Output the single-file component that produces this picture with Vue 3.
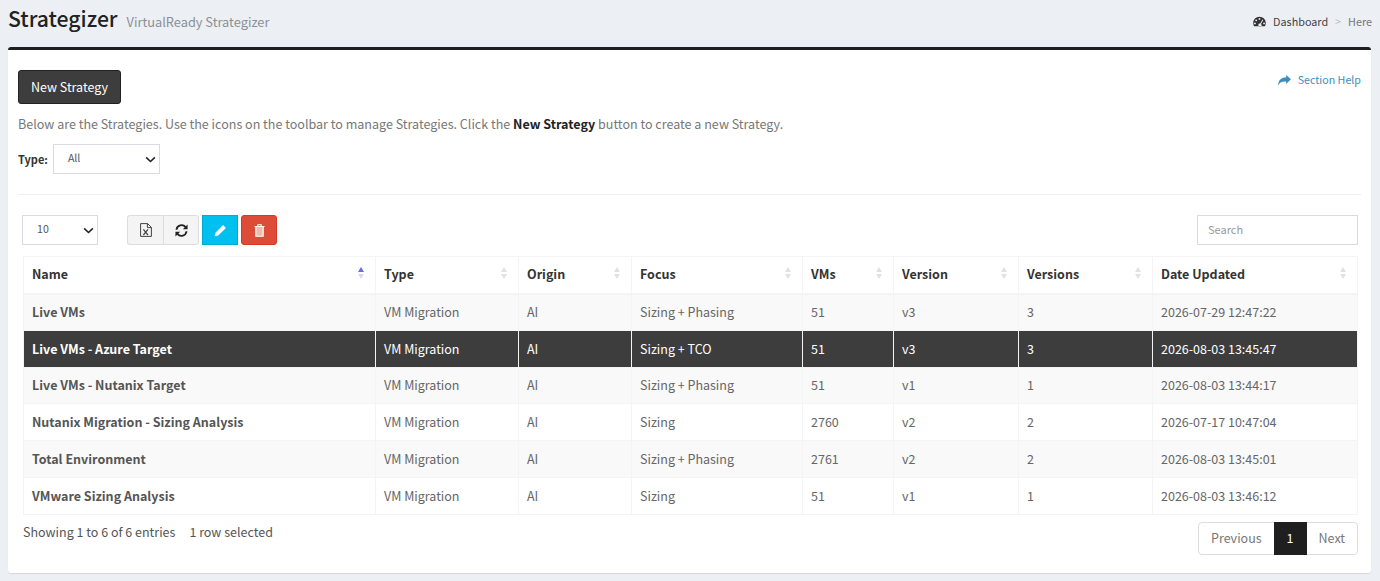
<template>
  <div class="page">
    <header class="page-header">
      <div class="titles">
        <h1>Strategizer</h1>
        <small>VirtualReady Strategizer</small>
      </div>
      <nav class="crumbs">
        <svg class="dash-icon" viewBox="0 0 16 14" width="13" height="11">
          <path fill-rule="evenodd" d="M8 1C3.6 1 0 4.6 0 9c0 1.500.4 2.900 1.100 4h13.800c.7-1.100 1.100-2.500 1.100-4 0-4.400-3.600-8-8-8zM8 2.500a1.200 1.200 0 1 1 0 2.400 1.200 1.200 0 0 1 0-2.400zM3.800 4.300a1.200 1.200 0 1 1 0 2.400 1.200 1.200 0 0 1 0-2.400zM2.200 8.200a1.200 1.200 0 1 1 0 2.400 1.200 1.200 0 0 1 0-2.400zM13.800 8.200a1.200 1.200 0 1 1 0 2.400 1.200 1.200 0 0 1 0-2.400zM11.800 4.600l1 .5-2.900 5a2 2 0 1 1-1-.5z" />
        </svg>
        <span class="crumb-link">Dashboard</span>
        <span class="crumb-sep">&gt;</span>
        <span class="crumb-here">Here</span>
      </nav>
    </header>

    <section class="box">
      <div class="top-row">
        <button class="btn-new">New Strategy</button>
        <a class="help">
          <svg viewBox="0 0 14 12" width="13" height="11">
            <path d="M14 4.700 8.800 0v2.600C4 2.600.3 4.400 0 11.800c1.300-3.600 4-5.100 8.800-4.700v2.700z" fill="#3c8dbc" />
          </svg>
          Section Help
        </a>
      </div>
      <p class="intro">Below are the Strategies. Use the icons on the toolbar to manage Strategies. Click the <b>New Strategy</b> button to create a new Strategy.</p>
      <div class="type-row">
        <label>Type:</label>
        <div class="select type-select">All<svg class="chev" viewBox="0 0 12 8" width="11" height="7"><path d="M1 1.500 6 6.300l5-4.800" fill="none" stroke="#222" stroke-width="1.800" /></svg></div>
      </div>

      <hr />

      <div class="toolbar">
        <div class="select len-select">10<svg class="chev" viewBox="0 0 12 8" width="11" height="7"><path d="M1 1.500 6 6.300l5-4.800" fill="none" stroke="#222" stroke-width="1.800" /></svg></div>
        <div class="tools">
          <div class="tool-group">
            <button class="tool">
              <svg viewBox="0 0 12 14" width="12" height="14">
                <path d="M.6.6h7l3.800 3.800v9H.6zM7.400.6v4h4" fill="none" stroke="#444" stroke-width="1" />
                <path d="m3.400 6.300 4.600 5.700M8 6.300l-4.600 5.700" fill="none" stroke="#444" stroke-width="1.200" />
              </svg>
            </button>
            <button class="tool">
              <svg viewBox="0 0 14 14" width="13" height="13">
                <path d="M1.600 6.200A5.500 5.500 0 0 1 11.400 3.400" fill="none" stroke="#222" stroke-width="2" />
                <path d="M13.500.6v5h-5z" fill="#222" />
                <path d="M12.400 7.800A5.500 5.500 0 0 1 2.600 10.600" fill="none" stroke="#222" stroke-width="2" />
                <path d="M.5 13.400v-5h5z" fill="#222" />
              </svg>
            </button>
          </div>
          <button class="tool-color edit">
            <svg viewBox="0 0 14 14" width="13" height="13">
              <path d="M9.800 1.200 12.800 4.200 4.600 12.400.8 13.200l.8-3.800z" fill="#fff" />
            </svg>
          </button>
          <button class="tool-color del">
            <svg viewBox="0 0 12 14" width="11" height="13">
              <path d="M4.200 2V.8h3.600V2M.5 2.700h11" fill="none" stroke="#fff" stroke-width="1.200" />
              <path d="M2 3v10.300h8V3" fill="#f3b9ae" stroke="#fff" stroke-width="1.300" />
            </svg>
          </button>
        </div>
        <div class="search">Search</div>
      </div>

      <table>
        <colgroup>
          <col v-for="w in colWidths" :key="w.key" :style="{ width: w.px + 'px' }" />
        </colgroup>
        <thead>
          <tr>
            <th v-for="(c, i) in columns" :key="c">
              {{ c }}
              <span class="sort">
                <i class="up" :class="{ active: i === 0 }"></i>
                <i class="down"></i>
              </span>
            </th>
          </tr>
        </thead>
        <tbody>
          <tr v-for="(r, i) in rows" :key="r.name" :class="{ odd: i % 2 === 0, selected: r.selected }">
            <td class="name">{{ r.name }}</td>
            <td>VM Migration</td>
            <td>AI</td>
            <td>{{ r.focus }}</td>
            <td>{{ r.vms }}</td>
            <td>{{ r.version }}</td>
            <td>{{ r.versions }}</td>
            <td>{{ r.date }}</td>
          </tr>
        </tbody>
      </table>

      <div class="table-foot">
        <div class="info">Showing 1 to 6 of 6 entries<span class="sel">1 row selected</span></div>
        <div class="pager">
          <span class="pg">Previous</span>
          <span class="pg current">1</span>
          <span class="pg">Next</span>
        </div>
      </div>
    </section>
  </div>
</template>

<script setup>
const columns = ['Name', 'Type', 'Origin', 'Focus', 'VMs', 'Version', 'Versions', 'Date Updated']
const colWidths = [352, 143, 113, 171, 91, 125, 134, 205].map((px, key) => ({ px, key }))

const rows = [
  { name: 'Live VMs', focus: 'Sizing + Phasing', vms: 51, version: 'v3', versions: 3, date: '2026-07-29 12:47:22' },
  { name: 'Live VMs - Azure Target', focus: 'Sizing + TCO', vms: 51, version: 'v3', versions: 3, date: '2026-08-03 13:45:47', selected: true },
  { name: 'Live VMs - Nutanix Target', focus: 'Sizing + Phasing', vms: 51, version: 'v1', versions: 1, date: '2026-08-03 13:44:17' },
  { name: 'Nutanix Migration - Sizing Analysis', focus: 'Sizing', vms: 2760, version: 'v2', versions: 2, date: '2026-07-17 10:47:04' },
  { name: 'Total Environment', focus: 'Sizing + Phasing', vms: 2761, version: 'v2', versions: 2, date: '2026-08-03 13:45:01' },
  { name: 'VMware Sizing Analysis', focus: 'Sizing', vms: 51, version: 'v1', versions: 1, date: '2026-08-03 13:46:12' },
]
</script>

<style>
body {
  background: #ecf0f5;
}
</style>

<style scoped>
.page {
  width: 1380px;
  height: 581px;
  overflow: hidden;
  background: #ecf0f5;
  font-family: "Noto Sans CJK SC", "Noto Sans", sans-serif;
  font-size: 12.5px;
  line-height: 20px;
  color: #333;
  box-sizing: border-box;
}
.page-header {
  height: 47px;
  display: flex;
  justify-content: space-between;
  padding: 0 8px 0 8px;
  box-sizing: border-box;
}
.titles {
  display: flex;
  align-items: baseline;
  height: 36px;
}
h1 {
  margin: 0;
  font-size: 21.200px;
  line-height: 36px;
  font-weight: 500;
  color: #222;
}
small {
  margin-left: 9px;
  font-size: 12.800px;
  color: #8a8f94;
}
.crumbs {
  display: flex;
  align-items: center;
  height: 42px;
  font-size: 10.800px;
  color: #444;
}
.dash-icon {
  fill: #333;
  margin-right: 7px;
}
.crumb-sep {
  margin: 0 7px;
  color: #bbb;
}
.crumb-here {
  color: #777;
}
.box {
  margin: 0 9px 0 8px;
  height: 526px;
  box-sizing: border-box;
  background: #fff;
  border-top: 3px solid #1f1f1f;
  border-radius: 3px;
  padding: 20px 10px 0 10px;
  box-shadow: 0 1px 1px rgba(0, 0, 0, 0.1);
}
.top-row {
  display: flex;
  justify-content: space-between;
  align-items: flex-start;
}
.btn-new {
  width: 103px;
  height: 34px;
  background: #3d3d3d;
  border: 1px solid #222;
  border-radius: 3px;
  color: #fff;
  font: inherit;
  padding: 0;
}
.help {
  display: flex;
  align-items: center;
  gap: 7px;
  height: 20px;
  font-size: 10.700px;
  color: #3c8dbc;
}
.intro {
  margin: 10px 0 0;
  font-size: 12.540px;
  color: #777;
}
.intro b {
  color: #222;
}
.type-row {
  display: flex;
  align-items: center;
  margin-top: 10px;
  height: 30px;
}
.type-row label {
  font-size: 11px;
  font-weight: 700;
  color: #333;
  margin-right: 5px;
}
.select {
  box-sizing: border-box;
  display: flex;
  align-items: center;
  justify-content: space-between;
  border: 1px solid #d8dbe2;
  background: #fff;
  font-size: 10.600px;
  line-height: 18px;
  color: #555;
  padding: 0 3px 2px 14px;
}
.type-select {
  width: 107px;
  height: 30px;
}
.len-select {
  width: 76px;
  height: 30px;
}
.chev {
  margin-top: 2px;
}
hr {
  border: 0;
  border-top: 1px solid #eee;
  margin: 20px 0 20px;
}
.toolbar {
  display: flex;
  align-items: center;
  padding: 0 3px 0 4px;
  height: 30px;
}
.tools {
  display: flex;
  gap: 3px;
  margin-left: 29px;
}
.tool-group {
  display: flex;
}
.tool {
  width: 36px;
  height: 30px;
  background: #f4f4f4;
  border: 1px solid #ddd;
  padding: 0;
  display: flex;
  align-items: center;
  justify-content: center;
}
.tool:first-child {
  border-radius: 3px 0 0 3px;
  border-right: 0;
}
.tool:last-child {
  border-radius: 0 3px 3px 0;
}
.tool-color {
  width: 36px;
  height: 30px;
  border: 1px solid transparent;
  padding: 0;
  display: flex;
  align-items: center;
  justify-content: center;
}
.edit {
  background: #00c0ef;
  border-color: #00acd6;
}
.del {
  background: #dd4b39;
  border-color: #d73925;
  border-radius: 3px;
}
.search {
  margin-left: auto;
  box-sizing: border-box;
  width: 161px;
  height: 30px;
  border: 1px solid #d8dbe2;
  font-size: 11px;
  line-height: 26px;
  padding-left: 10px;
  color: #999;
}
table {
  margin: 11px 0 0 5px;
  width: 1334px;
  table-layout: fixed;
  border-collapse: collapse;
}
th, td {
  box-sizing: border-box;
  padding: 0 8px;
  border: 1px solid #f4f4f4;
  text-align: left;
  white-space: nowrap;
}
th {
  height: 37px;
  padding-bottom: 2px;
  position: relative;
  font-weight: 700;
  color: #333;
  border-bottom-width: 2px;
}
td {
  height: 36.800px;
  color: #666;
}
td.name {
  font-weight: 700;
  color: #555;
}
tr.odd td {
  background: #f9f9f9;
}
tr.selected td {
  background: #3d3d3d;
  color: #fff;
  border-color: #f4f4f4;
}
.sort {
  position: absolute;
  right: 11px;
  top: 10px;
  display: flex;
  flex-direction: column;
  gap: 2px;
}
.sort i {
  display: block;
  width: 0;
  height: 0;
  border-left: 3px solid transparent;
  border-right: 3px solid transparent;
}
.sort .up {
  border-bottom: 5px solid #e2e2e2;
}
.sort .up.active {
  border-bottom-color: #6a6ae8;
}
.sort .down {
  border-top: 5px solid #e2e2e2;
}
tr th:first-child .down {
  border-top-color: #d8d8f8;
}
.table-foot {
  display: flex;
  justify-content: space-between;
  align-items: flex-start;
  padding: 0 3px 0 5px;
  margin-top: 7px;
}
.info {
  color: #555;
}
.sel {
  margin-left: 14px;
}
.pager {
  display: flex;
  height: 33px;
  border: 1px solid #ddd;
  border-radius: 4px;
  box-sizing: border-box;
}
.pg {
  display: flex;
  align-items: center;
  padding: 0 12px;
  color: #777;
}
.pg.current {
  background: #1f1f1f;
  color: #fff;
  margin: -1px 0;
  padding: 0 13px;
}
</style>
